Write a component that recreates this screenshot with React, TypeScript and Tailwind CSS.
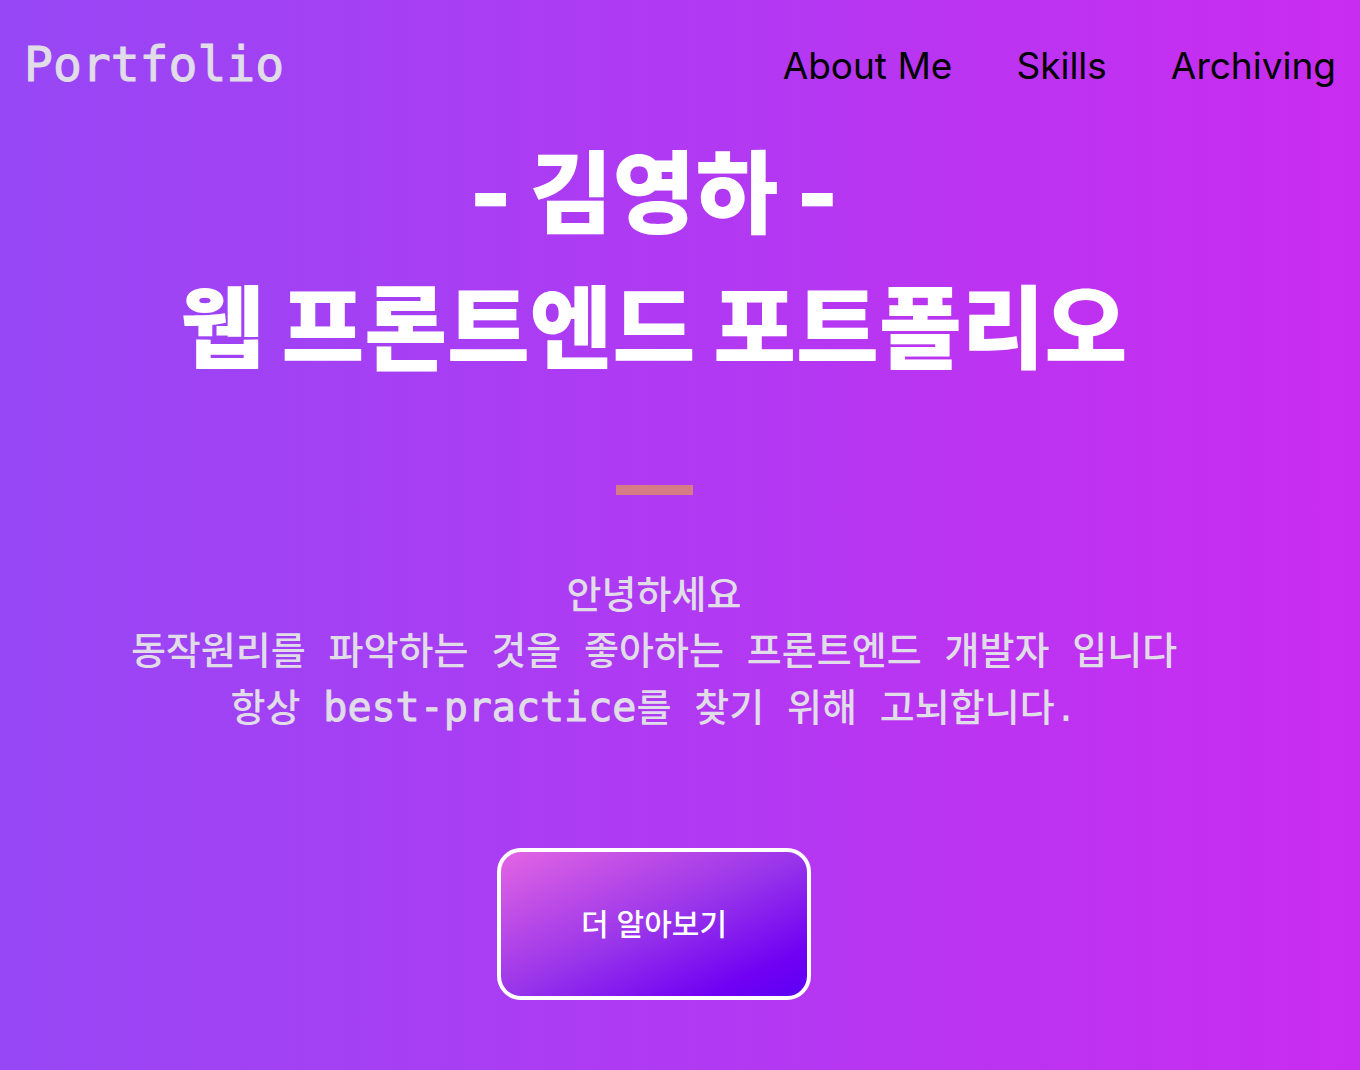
const links = ['About Me', 'Skills', 'Archiving'];

export default function App() {
  return (
    <div className="min-h-screen bg-[linear-gradient(to_right,#9747f5,#c92cf0)] font-['Inter','Noto_Sans_CJK_KR',sans-serif]">
      <header className="flex h-32 items-center justify-between px-6">
        <a href="#" className="font-['DejaVu_Sans_Mono',monospace] text-5xl text-[#e0dce8] [-webkit-text-stroke:1px]">Portfolio</a>
        <nav className="flex gap-16 pt-1 text-[37px] text-black">
          {links.map((link) => (
            <a key={link} href="#">{link}</a>
          ))}
        </nav>
      </header>
      <main className="-mt-0.5 mr-[52px] flex flex-col items-center text-center">
        <h1 className="text-[90px] leading-[135px] font-black text-white">
          - 김영하 -<br />웹 프론트엔드 포트폴리오
        </h1>
        <hr className="mt-[89px] h-[10px] w-[77px] border-0 bg-[#d57c86]" />
        <p className="mt-[72px] font-['DejaVu_Sans_Mono','Noto_Sans_CJK_KR',monospace] text-[38px] leading-[56px] font-medium text-[#e0dce8]">
          안녕하세요<br />동작원리를 파악하는 것을 좋아하는 프론트엔드 개발자 입니다<br />항상 <span className="text-[40px] [-webkit-text-stroke:1px]">best-practice</span>를 찾기 위해 고뇌합니다.
        </p>
        <button type="button" className="mt-[112px] h-[152px] w-[314px] rounded-3xl border-4 border-white bg-[linear-gradient(to_bottom_right,#e365e3,#9935ea_50%,#7000f3_84%,#5c00f5)] text-[30px] font-medium text-white">
          더 알아보기
        </button>
      </main>
    </div>
  );
}
